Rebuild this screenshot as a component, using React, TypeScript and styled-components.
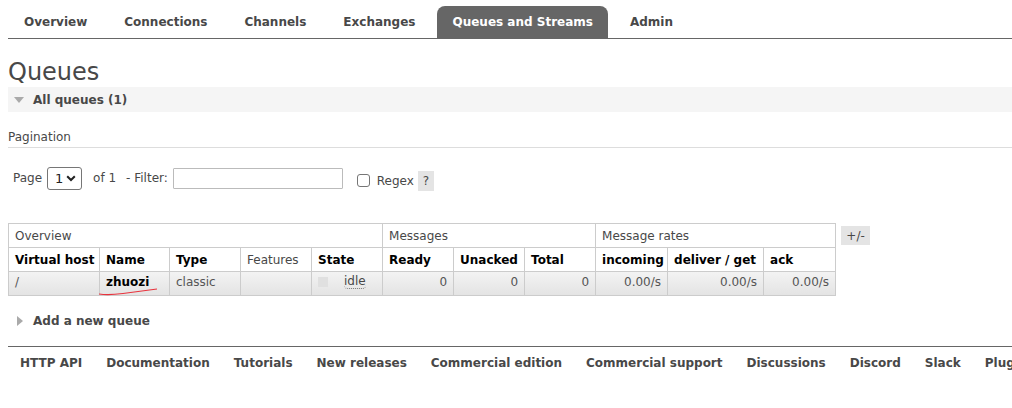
import React from "react";
import styled, { createGlobalStyle } from "styled-components";

const GlobalStyle = createGlobalStyle`
  html, body { margin: 0; padding: 0; background: #fff; }
  body {
    padding: 6px 0 0 8px;
    font-family: "DejaVu Sans", Verdana, sans-serif;
    font-size: 12px;
    color: #484848;
    overflow: hidden;
  }
  * { box-sizing: border-box; }
`;

const Page = styled.div`
  width: 1004px;
`;

const Menu = styled.ul`
  display: flex;
  gap: 7px;
  margin: 0;
  padding: 0 0 0 1px;
  list-style: none;
  border-bottom: 1px solid #666;
  height: 33px;
`;

const MenuItem = styled.li<{ $active?: boolean }>`
  height: 32px;
  line-height: 31px;
  padding: 1px 15px 0;
  font-weight: bold;
  border-radius: 8px 8px 0 0;
  background: ${(p) => (p.$active ? "#666" : "transparent")};
  color: ${(p) => (p.$active ? "#fff" : "#484848")};
  white-space: nowrap;
`;

const Title = styled.h1`
  margin: 19px 0 1px;
  font-size: 24px;
  font-weight: normal;
  line-height: 28px;
  color: #484848;
`;

const SectionBar = styled.div`
  height: 25px;
  display: flex;
  align-items: center;
  gap: 9px;
  padding-left: 6px;
  background: #f5f5f5;
  font-weight: bold;
  color: #484848;
`;

const Arrow = styled.span<{ $dir: "down" | "right" }>`
  width: 0;
  height: 0;
  display: inline-block;
  ${(p) =>
    p.$dir === "down"
      ? `border-left: 5px solid transparent; border-right: 5px solid transparent; border-top: 6px solid #aaa; margin-top: 1px;`
      : `border-top: 5px solid transparent; border-bottom: 5px solid transparent; border-left: 6px solid #aaa;`}
`;

const SubHeading = styled.h3`
  margin: 18px 0 0;
  padding-bottom: 3px;
  font-size: 12px;
  font-weight: normal;
  line-height: 14px;
  border-bottom: 1px solid #ddd;
  color: #484848;
`;

const PagerRow = styled.div`
  display: flex;
  align-items: center;
  margin-top: 18px;
  padding-left: 5px;
  height: 24px;
`;

const Select = styled.div`
  width: 35px;
  height: 23px;
  margin-left: 5px;
  border: 1px solid #767676;
  border-radius: 3px;
  display: flex;
  align-items: center;
  justify-content: space-between;
  padding: 0 5px 0 7px;
  color: #222;
  font-size: 13px;
`;

const Label = styled.span<{ $ml?: number; $dy?: number }>`
  margin-left: ${(p) => p.$ml ?? 0}px;
  position: relative;
  top: ${(p) => p.$dy ?? 0}px;
`;

const TextInput = styled.input`
  width: 170px;
  height: 21px;
  margin-left: 5px;
  border: 1px solid #bbb;
  border-radius: 1px;
  padding: 0 3px;
  font: inherit;
`;

const CheckBox = styled.span`
  width: 13px;
  height: 13px;
  margin-left: 14px;
  margin-top: 5px;
  border: 1px solid #767676;
  border-radius: 3px;
  background: #fff;
`;

const HelpBox = styled.span`
  width: 16px;
  height: 20px;
  margin-left: 4px;
  margin-top: 5px;
  background: #e4e4e4;
  display: flex;
  align-items: center;
  justify-content: center;
  color: #484848;
`;

const TableWrap = styled.div`
  position: relative;
  display: flex;
  align-items: flex-start;
  gap: 5px;
  margin-top: 33px;
`;

const Table = styled.table`
  border-collapse: collapse;
  table-layout: fixed;
  width: 827px;
`;

const Th = styled.th<{ $group?: boolean }>`
  height: 24px;
  padding: 0 6px;
  border: 1px solid #ccc;
  text-align: left;
  font-weight: ${(p) => (p.$group ? "normal" : "bold")};
  color: ${(p) => (p.$group ? "#484848" : "#000")};
  white-space: nowrap;
  overflow: hidden;
`;

const Row = styled.tr`
  background: linear-gradient(#f3f3f3, #e3e3e3);
`;

const Td = styled.td<{ $right?: boolean; $strong?: boolean }>`
  height: 24px;
  padding: 0 6px 3px;
  border: 1px solid #ccc;
  text-align: ${(p) => (p.$right ? "right" : "left")};
  font-weight: ${(p) => (p.$strong ? "bold" : "normal")};
  color: ${(p) => (p.$strong ? "#000" : "#555")};
  white-space: nowrap;
`;

const StateCell = styled.div`
  display: flex;
  align-items: center;
  gap: 16px;
`;

const StateDot = styled.span`
  width: 10px;
  height: 10px;
  background: #e0e0e0;
`;

const Abbr = styled.span`
  color: #484848;
  border-bottom: 1px dotted #777;
  border-radius: 0 0 4px 4px;
  line-height: 13px;
`;

const ToggleButton = styled.span`
  margin-top: 3px;
  width: 29px;
  height: 19px;
  background: #e4e4e4;
  display: flex;
  align-items: center;
  justify-content: center;
  color: #484848;
`;

const Scribble = styled.svg`
  position: absolute;
  left: 0;
  top: 0;
  pointer-events: none;
`;

const AddBar = styled.div`
  margin-top: 18px;
  height: 14px;
  display: flex;
  align-items: center;
  gap: 10px;
  padding-left: 9px;
  font-weight: bold;
  color: #484848;
`;

const Footer = styled.ul`
  display: flex;
  margin: 18px 0 0;
  padding: 8px 0 0;
  list-style: none;
  border-top: 1px solid #666;
  white-space: nowrap;
  overflow: hidden;
`;

const FooterLink = styled.li`
  padding: 0 12px;
  font-weight: bold;
  line-height: 16px;
  color: #484848;
`;

const tabs = ["Overview", "Connections", "Channels", "Exchanges", "Queues and Streams", "Admin"];
const footerLinks = [
  "HTTP API",
  "Documentation",
  "Tutorials",
  "New releases",
  "Commercial edition",
  "Commercial support",
  "Discussions",
  "Discord",
  "Slack",
  "Plugins",
];
const colWidths = [91, 70, 71, 71, 71, 71, 71, 71, 72, 96, 72];

export default function App() {
  return (
    <Page>
      <GlobalStyle />
      <Menu>
        {tabs.map((t) => (
          <MenuItem key={t} $active={t === "Queues and Streams"}>
            {t}
          </MenuItem>
        ))}
      </Menu>
      <Title>Queues</Title>
      <SectionBar>
        <Arrow $dir="down" />
        All queues (1)
      </SectionBar>
      <SubHeading>Pagination</SubHeading>
      <PagerRow>
        <Label>Page</Label>
        <Select>
          <span>1</span>
          <svg width="10" height="7" viewBox="0 0 10 7">
            <path d="M1.2 1.2 L5 5 L8.8 1.2" fill="none" stroke="#222" strokeWidth="2" />
          </svg>
        </Select>
        <Label $ml={11}>of 1</Label>
        <Label $ml={10}>- Filter:</Label>
        <TextInput type="text" />
        <CheckBox />
        <Label $ml={7} $dy={3}>
          Regex
        </Label>
        <HelpBox>?</HelpBox>
      </PagerRow>
      <TableWrap>
        <Table>
          <colgroup>
            {colWidths.map((w, i) => (
              <col key={i} style={{ width: w }} />
            ))}
          </colgroup>
          <thead>
            <tr>
              <Th $group colSpan={5}>Overview</Th>
              <Th $group colSpan={3}>Messages</Th>
              <Th $group colSpan={3}>Message rates</Th>
            </tr>
            <tr>
              <Th>Virtual host</Th>
              <Th>Name</Th>
              <Th>Type</Th>
              <Th $group>Features</Th>
              <Th>State</Th>
              <Th>Ready</Th>
              <Th>Unacked</Th>
              <Th>Total</Th>
              <Th>incoming</Th>
              <Th>deliver / get</Th>
              <Th>ack</Th>
            </tr>
          </thead>
          <tbody>
            <Row>
              <Td>/</Td>
              <Td $strong>zhuozi</Td>
              <Td>classic</Td>
              <Td />
              <Td>
                <StateCell>
                  <StateDot />
                  <Abbr>idle</Abbr>
                </StateCell>
              </Td>
              <Td $right>0</Td>
              <Td $right>0</Td>
              <Td $right>0</Td>
              <Td $right>0.00/s</Td>
              <Td $right>0.00/s</Td>
              <Td $right>0.00/s</Td>
            </Row>
          </tbody>
        </Table>
        <ToggleButton>+/-</ToggleButton>
        <Scribble width="200" height="80" viewBox="0 0 200 80">
          <path d="M91 71 Q 100 72.5 115 70.5 T 149 66" fill="none" stroke="#e8333d" strokeWidth="1.2" />
        </Scribble>
      </TableWrap>
      <AddBar>
        <Arrow $dir="right" />
        Add a new queue
      </AddBar>
      <Footer>
        {footerLinks.map((l) => (
          <FooterLink key={l}>{l}</FooterLink>
        ))}
      </Footer>
    </Page>
  );
}
